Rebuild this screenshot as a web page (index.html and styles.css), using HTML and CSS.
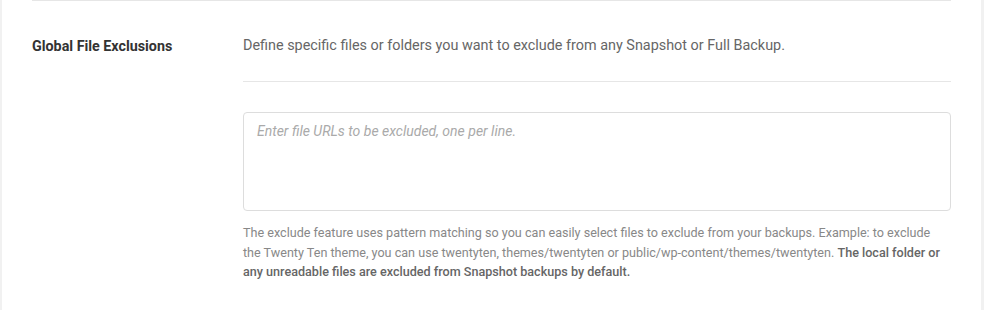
FILE: index.html
```html
<!DOCTYPE html>
<html lang="en">
<head>
<meta charset="UTF-8">
<title>Snapshot settings</title>
<link rel="stylesheet" href="styles.css">
</head>
<body>

<div class="box">
    <!-- file exclusions row -->
    <div class="row">
        <div class="row-label">Global File Exclusions</div>
        <div class="row-content">
            <p class="row-desc">Define specific files or folders you want to exclude from any Snapshot or Full Backup.</p>
            <textarea class="exclusions" placeholder="Enter file URLs to be excluded, one per line."></textarea>
            <p class="row-help">The exclude feature uses pattern matching so you can easily select files to exclude from your backups. Example: to exclude the Twenty Ten theme, you can use twentyten, themes/twentyten or public/wp-content/themes/twentyten. <strong>The local folder or any unreadable files are excluded from Snapshot backups by default.</strong></p>
        </div>
    </div>
</div>

</body>
</html>
```

FILE: styles.css
```css
body {
margin: 0;
background: #f1f1f1;
font-family: Roboto, "Liberation Sans", sans-serif;
}

.box {
margin: 0 3px 0 2px;
background: #fff;
padding: 0 30px;
height: 310px;
}

.row {
display: flex;
border-top: 1px solid #e6e6e6;
padding-top: 34px;
}

.row-label {
width: 211px;
flex-shrink: 0;
font-size: 14.3px;
font-weight: 700;
color: #333;
line-height: 22px;
}

.row-content {
flex: 1;
}

.row-desc {
margin: 0;
padding-bottom: 24px;
border-bottom: 1px solid #e6e6e6;
font-size: 14.4px;
line-height: 22px;
color: #666;
}

.exclusions {
display: block;
box-sizing: border-box;
width: 100%;
height: 99px;
margin-top: 30px;
padding: 8px 13px;
border: 1px solid #ddd;
border-radius: 4px;
font-family: inherit;
font-size: 14px;
line-height: 20px;
resize: none;
}

.exclusions::placeholder {
color: #aaa;
font-style: italic;
}

.row-help {
margin: 12px 0 0;
font-size: 12.6px;
line-height: 19.5px;
color: #888;
}

.row-help strong {
color: #666;
font-weight: 500;
}
```
